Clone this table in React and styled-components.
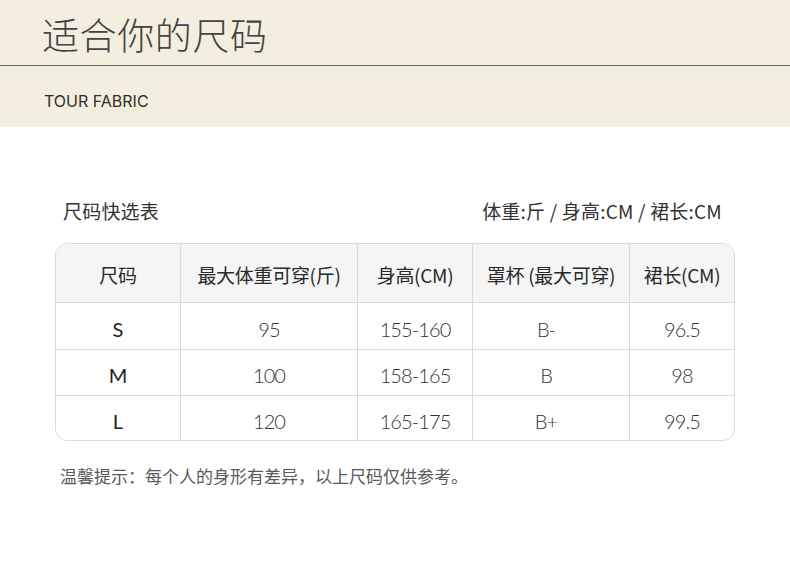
import styled, { createGlobalStyle } from 'styled-components';

const GlobalStyle = createGlobalStyle`
  html, body {
    margin: 0;
    padding: 0;
    background: #fff;
  }
  body {
    font-family: "Noto Sans CJK SC", "Noto Sans", sans-serif;
    color: #333;
  }
`;

const rows = [
  ['S', '95', '155-160', 'B-', '96.5'],
  ['M', '100', '158-165', 'B', '98'],
  ['L', '120', '165-175', 'B+', '99.5'],
];

const heads = ['尺码', '最大体重可穿(斤)', '身高(CM)', '罩杯 (最大可穿)', '裙长(CM)'];
const widths = ['124px', '177px', '115px', '157px', '1fr'];

const App = () => {
  return (
    <Page>
      <GlobalStyle />
      <Banner>
        <TitleRow>
          <Title>适合你的尺码</Title>
        </TitleRow>
        <SubRow>
          <Brand>TOUR FABRIC</Brand>
        </SubRow>
      </Banner>
      <Body>
        <Caption>
          <CaptionText>尺码快选表</CaptionText>
          <CaptionText>体重:斤 / 身高:CM / 裙长:CM</CaptionText>
        </Caption>
        <Table>
          {heads.map((h, i) => (
            <HeadCell key={h} $first={i === 0}>
              {h}
            </HeadCell>
          ))}
          {rows.map((r, ri) =>
            r.map((v, ci) => (
              <Cell
                key={`${ri}-${ci}`}
                $first={ci === 0}
                $cup={ci === 3}
                $bottom={ri === rows.length - 1}
              >
                {v}
              </Cell>
            ))
          )}
        </Table>
        <Note>温馨提示：每个人的身形有差异，以上尺码仅供参考。</Note>
      </Body>
    </Page>
  );
};

const Page = styled.div`
  width: 790px;
  min-height: 564px;
  background: #fff;
`;

const Banner = styled.div`
  background-color: #f4eedf;
  height: 127px;
  display: flex;
  flex-direction: column;
`;

const TitleRow = styled.div`
  height: 66px;
  border-bottom: 1px solid #6b6b6b;
  box-sizing: border-box;
  padding: 0 0 0 42px;
  display: flex;
  align-items: flex-end;
`;

const Title = styled.h1`
  margin: 0 0 6px;
  font-size: 37px;
  font-weight: 300;
  line-height: 50px;
  color: #444;
  letter-spacing: 0.6px;
`;

const SubRow = styled.div`
  padding: 24px 0 0 44px;
`;

const Brand = styled.div`
  font-family: Inter, "Noto Sans", sans-serif;
  font-size: 16px;
  font-weight: 400;
  color: #2f2f2f;
  line-height: 22px;
`;

const Body = styled.div`
  padding: 70px 55px 0;
`;

const Caption = styled.div`
  display: flex;
  justify-content: space-between;
  align-items: center;
  padding: 0 13px 0 8px;
  height: 28px;
`;

const CaptionText = styled.span`
  font-size: 19px;
  color: #333;
  font-weight: 400;
  line-height: 28px;
  letter-spacing: 0.2px;
`;

const Table = styled.div`
  margin-top: 18px;
  display: grid;
  grid-template-columns: ${widths.join(' ')};
  grid-template-rows: 59px 47px 46px 44px;
  border: 1px solid #dadada;
  border-radius: 12px;
  overflow: hidden;
`;

const HeadCell = styled.div`
  background: #f5f5f5;
  display: flex;
  align-items: center;
  justify-content: center;
  padding-top: 2px;
  font-size: 19px;
  font-weight: 400;
  color: #2a2a2a;
  border-bottom: 1px solid #dadada;
  border-left: ${(p) => (p.$first ? 'none' : '1px solid #dadada')};
  white-space: nowrap;
  letter-spacing: -0.3px;
`;

const Cell = styled.div`
  display: flex;
  align-items: center;
  justify-content: center;
  padding-top: 5px;
  padding-right: ${(p) => (p.$cup ? '10px' : '0')};
  font-family: Lato, "Noto Sans", sans-serif;
  font-size: 20px;
  font-weight: ${(p) => (p.$first ? 400 : 300)};
  color: ${(p) => (p.$first ? '#222' : '#333')};
  letter-spacing: ${(p) => (p.$first ? '0' : '-0.9px')};
  border-left: ${(p) => (p.$first ? 'none' : '1px solid #dadada')};
  border-bottom: ${(p) => (p.$bottom ? 'none' : '1px solid #dadada')};
`;

const Note = styled.p`
  margin: 23px 0 0 5px;
  font-size: 17px;
  color: #5a5a5a;
  line-height: 24px;
`;

export default App;
